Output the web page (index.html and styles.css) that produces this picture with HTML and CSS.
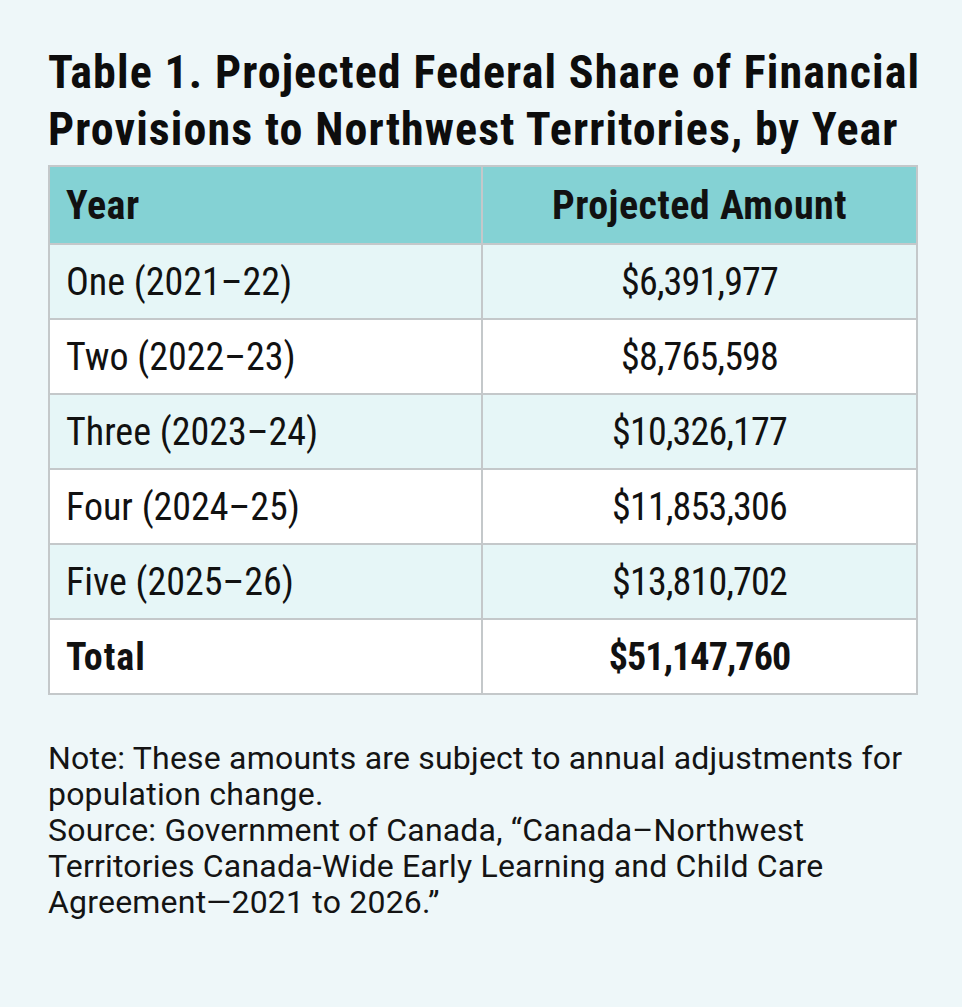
FILE: index.html
```html
<!DOCTYPE html>
<html lang="en">
<head>
<meta charset="utf-8">
<title>Table 1</title>
<link rel="stylesheet" href="styles.css">
</head>
<body>
<main class="panel">
  <h1 class="title">Table 1. Projected Federal Share of Financial Provisions to Northwest Territories, by Year</h1>
  <table class="data">
    <colgroup><col class="c-year"><col class="c-amt"></colgroup>
    <thead>
      <tr><th class="col-year">Year</th><th class="col-amt">Projected Amount</th></tr>
    </thead>
    <tbody>
      <tr class="alt"><td class="col-year">One (2021–22)</td><td class="col-amt">$6,391,977</td></tr>
      <tr><td class="col-year">Two (2022–23)</td><td class="col-amt">$8,765,598</td></tr>
      <tr class="alt"><td class="col-year">Three (2023–24)</td><td class="col-amt">$10,326,177</td></tr>
      <tr><td class="col-year">Four (2024–25)</td><td class="col-amt">$11,853,306</td></tr>
      <tr class="alt"><td class="col-year">Five (2025–26)</td><td class="col-amt">$13,810,702</td></tr>
      <tr class="total"><td class="col-year">Total</td><td class="col-amt">$51,147,760</td></tr>
    </tbody>
  </table>
  <div class="notes">
    <p>Note: These amounts are subject to annual adjustments for population change.</p>
    <p>Source: Government of Canada, “Canada–Northwest Territories Canada-Wide Early Learning and Child Care Agreement—2021 to 2026.”</p>
  </div>
</main>
</body>
</html>
```
FILE: styles.css
```css
html, body {
  margin: 0;
  padding: 0;
  background: #eef7f9;
}
body {
  width: 962px;
  min-height: 1007px;
  font-family: Roboto, "Roboto Condensed", "Liberation Sans", sans-serif;
  color: #111;
}
.panel {
  padding: 44px 44px 0 48px;
}
.title {
  margin: 0 -14px 0 0;
  font-size: 46px;
  line-height: 57px;
  font-weight: 700;
  font-stretch: 75%;
  letter-spacing: 1.1px;
  color: #0d0d0d;
}
.data {
  margin-top: 7px;
  width: 870px;
  border-collapse: collapse;
  table-layout: fixed;
  border: 2px solid #c4c8ca;
}
.data .c-year {
  width: 433px;
}
.data th, .data td {
  border: 2px solid #c4c8ca;
  padding: 0 16px;
  font-stretch: 75%;
}
.data th {
  background: #84d2d4;
  height: 76px;
  font-size: 40px;
  font-weight: 700;
  letter-spacing: 0.5px;
}
.data td {
  height: 73px;
  font-size: 38px;
  font-weight: 400;
  background: #ffffff;
}
.data tr.alt td {
  background: #e6f6f7;
}
.data .col-year {
  text-align: left;
}
.data .col-amt {
  text-align: center;
}
.data td.col-amt {
  letter-spacing: -0.8px;
}
.data tr.total td {
  font-weight: 700;
}
.data tr.total td.col-year {
  letter-spacing: 1px;
}
.data tr.total td.col-amt {
  letter-spacing: -0.9px;
}
.notes {
  margin-top: 45px;
  font-size: 32px;
  line-height: 36px;
  font-stretch: 100%;
  font-weight: 400;
  letter-spacing: 0.2px;
  color: #141414;
}
.notes p {
  margin: 0;
}
```
